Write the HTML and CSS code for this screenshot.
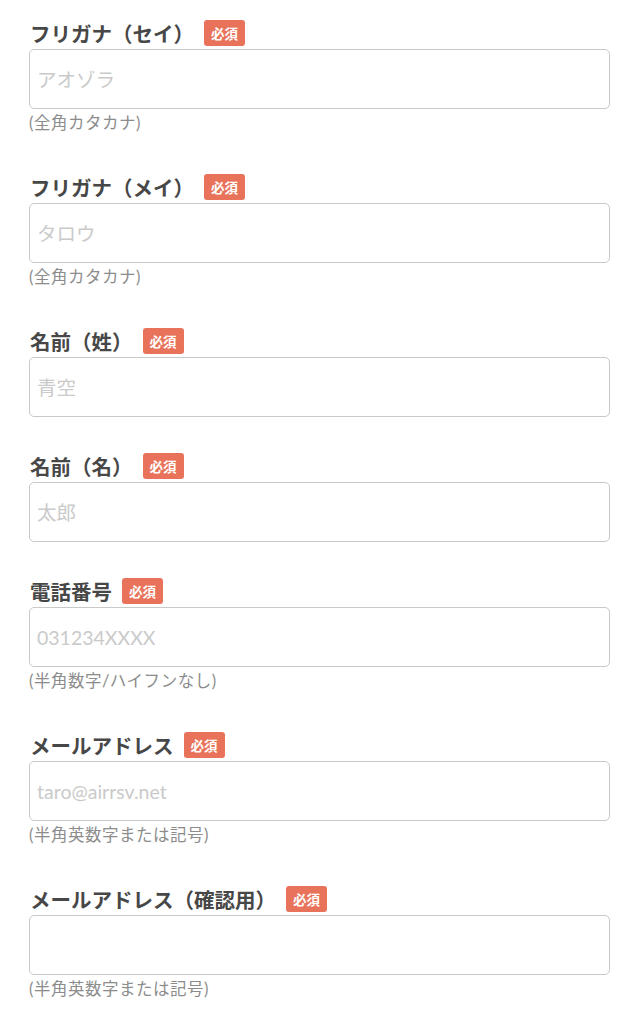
FILE: index.html
```html
<!DOCTYPE html>
<html lang="ja">
<head>
<meta charset="utf-8">
<link rel="stylesheet" href="styles.css">
</head>
<body>
<form class="form">
  <div class="field">
    <div class="label-row"><span class="label">フリガナ（セイ）</span><span class="badge">必須</span></div>
    <input class="input" type="text" placeholder="アオゾラ">
    <div class="note">(全角カタカナ)</div>
  </div>
  <div class="field">
    <div class="label-row"><span class="label">フリガナ（メイ）</span><span class="badge">必須</span></div>
    <input class="input" type="text" placeholder="タロウ">
    <div class="note">(全角カタカナ)</div>
  </div>
  <div class="field">
    <div class="label-row"><span class="label">名前（姓）</span><span class="badge">必須</span></div>
    <input class="input" type="text" placeholder="青空">
  </div>
  <div class="field">
    <div class="label-row"><span class="label">名前（名）</span><span class="badge">必須</span></div>
    <input class="input" type="text" placeholder="太郎">
  </div>
  <div class="field">
    <div class="label-row"><span class="label">電話番号</span><span class="badge">必須</span></div>
    <input class="input" type="tel" placeholder="031234XXXX">
    <div class="note">(半角数字/ハイフンなし)</div>
  </div>
  <div class="field">
    <div class="label-row"><span class="label">メールアドレス</span><span class="badge">必須</span></div>
    <input class="input" type="email" placeholder="taro@airrsv.net">
    <div class="note">(半角英数字または記号)</div>
  </div>
  <div class="field">
    <div class="label-row"><span class="label">メールアドレス（確認用）</span><span class="badge">必須</span></div>
    <input class="input" type="email">
    <div class="note">(半角英数字または記号)</div>
  </div>
</form>
</body>
</html>
```

FILE: styles.css
```css
* {
  box-sizing: border-box;
}

html, body {
  margin: 0;
  padding: 0;
  background: #ffffff;
}

body {
  font-family: "Lato", "Noto Sans CJK JP", sans-serif;
  color: #444444;
}

.form {
  padding: 20px 15px 0 29px;
  display: flex;
  flex-direction: column;
}

.field {
  display: flex;
  flex-direction: column;
  margin-bottom: 36px;
}

.label-row {
  display: flex;
  align-items: center;
  gap: 10px;
  height: 26px;
  margin-bottom: 3px;
}

.label {
  font-family: "Noto Sans CJK JP", sans-serif;
  font-size: 20.5px;
  font-weight: 700;
  color: #474747;
  line-height: 26px;
  padding-left: 1px;
}

.badge {
  display: inline-flex;
  align-items: center;
  justify-content: center;
  width: 41px;
  height: 26px;
  border-radius: 3px;
  background: #e8735a;
  color: #ffffff;
  font-family: "Noto Sans CJK JP", sans-serif;
  font-size: 13.5px;
  font-weight: 700;
}

.input {
  display: block;
  width: 581px;
  height: 60px;
  margin: 0;
  padding: 0 7px;
  border: 1.5px solid #c9c9c9;
  border-radius: 5px;
  background: #ffffff;
  font-family: "Lato", "Noto Sans CJK JP", sans-serif;
  font-size: 19.5px;
  font-weight: 400;
  color: #333333;
  outline: none;
}

.input::placeholder {
  color: #cacaca;
}

.note {
  font-family: "Lato", "Noto Sans CJK JP", sans-serif;
  font-size: 16.5px;
  font-weight: 400;
  line-height: 29px;
  color: #8c8c8c;
  letter-spacing: 0.5px;
}
```
